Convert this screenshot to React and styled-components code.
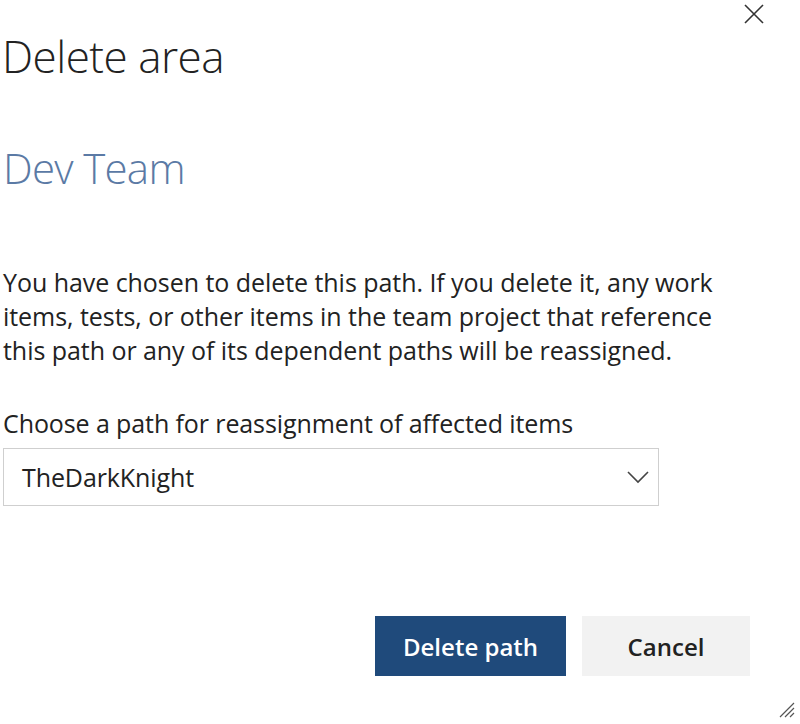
import styled, { createGlobalStyle } from 'styled-components';

const GlobalStyle = createGlobalStyle`
  html, body {
    margin: 0;
    padding: 0;
    background: #fff;
  }
  body {
    font-family: "Open Sans", "Noto Sans", sans-serif;
    color: #222;
  }
`;

const Dialog = styled.div`
  position: relative;
  width: 800px;
  height: 724px;
  box-sizing: border-box;
  padding: 26px 0 0 3px;
  display: flex;
  flex-direction: column;
`;

const CloseButton = styled.button`
  position: absolute;
  top: 2px;
  right: 34px;
  width: 24px;
  height: 24px;
  padding: 0;
  border: none;
  background: none;
  cursor: pointer;
`;

const Title = styled.h1`
  margin: 0 0 0 -1px;
  font-size: 44px;
  font-weight: 300;
  line-height: 60px;
  color: #222;
  letter-spacing: -0.5px;
`;

const SubTitle = styled.h2`
  margin: 52px 0 0 0;
  font-size: 42px;
  font-weight: 300;
  line-height: 60px;
  color: #5b7aa5;
  letter-spacing: -0.7px;
`;

const Message = styled.p`
  margin: 67px 0 0;
  font-size: 25px;
  line-height: 34px;
  color: #222;
  letter-spacing: -0.05px;
`;

const Label = styled.div`
  margin-top: 39px;
  font-size: 25px;
  line-height: 34px;
  letter-spacing: -0.1px;
`;

const Select = styled.div`
  margin-top: 8px;
  width: 656px;
  height: 58px;
  box-sizing: border-box;
  border: 1px solid #cfcfcf;
  display: flex;
  align-items: center;
  justify-content: space-between;
  padding: 0 9px 0 18px;
  font-size: 25px;
  letter-spacing: -0.1px;
`;

const Actions = styled.div`
  margin-top: 110px;
  display: flex;
  justify-content: flex-end;
  gap: 16px;
  padding-right: 50px;
`;

const Button = styled.button`
  height: 60px;
  width: ${(p) => p.$w}px;
  border: none;
  font-family: inherit;
  font-size: 24px;
  font-weight: 600;
  cursor: pointer;
  background: ${(p) => (p.$primary ? '#1f4a7b' : '#f2f2f2')};
  color: ${(p) => (p.$primary ? '#fff' : '#222')};
`;

const Grip = styled.svg`
  position: absolute;
  right: 5px;
  bottom: 6px;
`;

const App = () => {
  return (
    <>
      <GlobalStyle />
      <Dialog>
        <CloseButton aria-label="Close">
          <svg width="24" height="24" viewBox="0 0 24 24">
            <path d="M3 3 L21 21 M21 3 L3 21" stroke="#333" strokeWidth="1.6" fill="none" />
          </svg>
        </CloseButton>
        <Title>Delete area</Title>
        <SubTitle>Dev Team</SubTitle>
        <Message>
          You have chosen to delete this path. If you delete it, any work
          <br />
          items, tests, or other items in the team project that reference
          <br />
          this path or any of its dependent paths will be reassigned.
        </Message>
        <Label>Choose a path for reassignment of affected items</Label>
        <Select>
          <span>TheDarkKnight</span>
          <svg width="22" height="14" viewBox="0 0 22 14">
            <path d="M1 2 L11 12 L21 2" stroke="#444" strokeWidth="1.6" fill="none" />
          </svg>
        </Select>
        <Actions>
          <Button $primary $w={191}>Delete path</Button>
          <Button $w={168}>Cancel</Button>
        </Actions>
        <Grip width="18" height="18" viewBox="0 0 18 18">
          <path d="M3 17 L17 3 M8 17 L17 8 M13 17 L17 13" stroke="#555" strokeWidth="1.2" />
        </Grip>
      </Dialog>
    </>
  );
};

export default App;
